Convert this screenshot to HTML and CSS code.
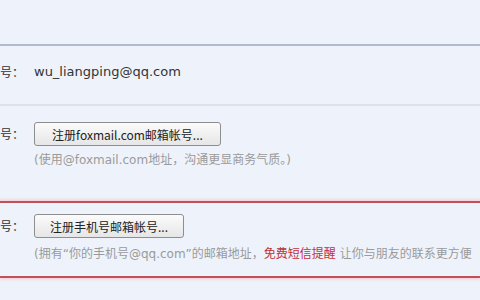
FILE: index.html
```html
<!DOCTYPE html>
<html lang="zh-CN">
<head>
    <meta charset="UTF-8">
    <title>帐号设置</title>
    <link rel="stylesheet" href="styles.css">
</head>
<body>
    <div class="page">
        <div class="top"></div>

        <div class="row row-email">
            <div class="label">号：</div>
            <div class="value">wu_liangping@qq.com</div>
        </div>

        <div class="row row-fox">
            <div class="label">号：</div>
            <div class="value">
                <button class="btn">注册foxmail.com邮箱帐号...</button>
                <div class="hint">(使用@foxmail.com地址，沟通更显商务气质。)</div>
            </div>
        </div>

        <div class="row row-mobile">
            <div class="label">号：</div>
            <div class="value">
                <button class="btn">注册手机号邮箱帐号...</button>
                <div class="hint">(拥有“你的手机号@qq.com”的邮箱地址，<span class="red">免费短信提醒</span> 让你与朋友的联系更方便</div>
            </div>
        </div>
    </div>
</body>
</html>
```

FILE: styles.css
```css
body {
    margin: 0;
    background-color: #eef3fb;
    font-family: "DejaVu Sans", "Noto Sans CJK SC", sans-serif;
    font-size: 12px;
    color: #333;
    overflow: hidden;
}

.page {
    width: 480px;
    height: 300px;
    overflow: hidden;
}

.top {
    height: 44px;
    border-bottom: 2px solid #aebcd3;
}

.row {
    display: flex;
}

.label {
    width: 34px;
    flex-shrink: 0;
    font-family: "Noto Sans CJK SC", sans-serif;
    font-size: 12px;
}

.value {
    white-space: nowrap;
}

.row-email {
    height: 60px;
    padding-top: 17px;
    box-sizing: border-box;
    border-bottom: 2px solid #dde2ea;
    font-size: 13px;
    line-height: 18px;
}

.row-fox {
    height: 95px;
    padding-top: 16px;
    box-sizing: border-box;
}

.row-fox .label,
.row-mobile .label {
    line-height: 24px;
}

.row-mobile {
    height: 77px;
    padding-top: 11px;
    box-sizing: border-box;
    border-top: 2px solid #c2505c;
    border-bottom: 2px solid #c2505c;
    box-shadow: 0 -2px 2px #f6d6dc, 0 2px 2px #f6d6dc;
}

.btn {
    height: 24px;
    padding: 0 12px;
    border: 1px solid #8e8e8e;
    border-radius: 3px;
    background: linear-gradient(#fbfbfb, #e6e6e6);
    font-family: "Noto Sans CJK SC", sans-serif;
    font-size: 12px;
    color: #222;
}

.row-fox .btn {
    width: 187px;
}

.row-mobile .btn {
    width: 150px;
}

.hint {
    margin-top: 6px;
    font-family: "DejaVu Sans", "Noto Sans CJK SC", sans-serif;
    font-size: 12px;
    line-height: 16px;
    color: #9a9a9a;
}

.row-mobile .hint {
    margin-top: 8px;
}

.red {
    color: #c0303c;
}
```
